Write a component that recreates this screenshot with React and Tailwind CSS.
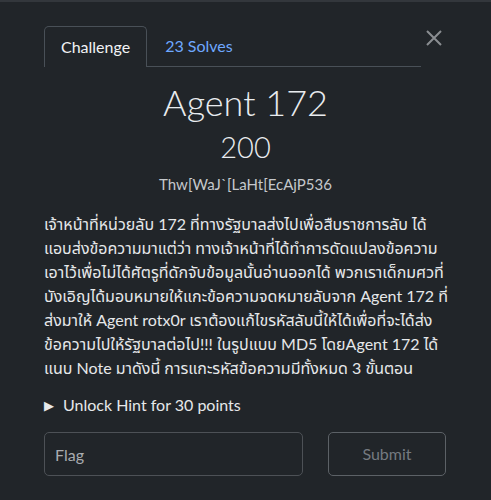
import React from 'react';

const lines = [
  'เจ้าหน้าที่หน่วยลับ 172 ที่ทางรัฐบาลส่งไปเพื่อสืบราชการลับ ได้',
  'แอบส่งข้อความมาแต่ว่า ทางเจ้าหน้าที่ได้ทำการดัดแปลงข้อความ',
  'เอาไว้เพื่อไม่ได้ศัตรูที่ดักจับข้อมูลนั้นอ่านออกได้ พวกเราเด็กมศวที่',
  'บังเอิญได้มอบหมายให้แกะข้อความจดหมายลับจาก Agent 172 ที่',
  'ส่งมาให้ Agent rotx0r เราต้องแก้ไขรหัสลับนี้ให้ได้เพื่อที่จะได้ส่ง',
  'ข้อความไปให้รัฐบาลต่อไป!!! ในรูปแบบ MD5 โดยAgent 172 ได้',
  'แนบ Note มาดังนี้ การแกะรหัสข้อความมีทั้งหมด 3 ขั้นตอน',
];

const App = () => {
  return (
    <div className="min-h-screen bg-[#212529] text-[#dee2e6] font-['Lato','Noto_Sans','Noto_Sans_Thai',sans-serif]">
      <div className="h-[2px] bg-[#33373c]" />
      <div className="px-[44px] pt-[24px]">
        {/* tabs + close */}
        <div className="flex items-start">
          <div className="flex flex-1 border-b border-[#495057]">
            <div className="-mb-px px-4 py-2 text-base leading-6 text-[#f1f3f5] bg-[#212529] border border-b-0 border-[#495057] rounded-t-[5px]">
              Challenge
            </div>
            <div className="px-[18px] py-2 text-base leading-6 text-[#6ea8fe]">23 Solves</div>
          </div>
          <button className="w-[26px] h-[40px] flex items-start justify-start pl-[5px] pt-[4px] text-[#8a8d91]">
            <svg width="16" height="16" viewBox="0 0 16 16" stroke="currentColor" strokeWidth="2">
              <path d="M1 1 L15 15 M15 1 L1 15" />
            </svg>
          </button>
        </div>

        {/* header */}
        <div className="flex flex-col items-center mt-[13px]">
          <h3 className="text-[36px] leading-[44px] font-light text-[#e9ecef]">Agent 172</h3>
          <h4 className="text-[29px] leading-[36px] mt-[5px] font-light text-[#e9ecef]">200</h4>
          <p className="text-[15px] leading-[22px] mt-[8px] text-[#c5c8cc]">Thw[WaJ`[LaHt[EcAjP536</p>
        </div>

        {/* description */}
        <div className="mt-[17px] text-[16px] leading-[24px] text-[#e6e8ea]">
          {lines.map((l, i) => (
            <div key={i} className="h-[24px] whitespace-nowrap">{l}</div>
          ))}
        </div>

        {/* hint */}
        <div className="mt-[13px] flex items-center gap-[9px] text-[16px] leading-[24px] text-[#e6e8ea]">
          <span className="text-[13px] leading-none text-[#e6e8ea]">▶</span>
          <span>Unlock Hint for 30 points</span>
        </div>

        {/* flag form */}
        <div className="mt-[15px] flex gap-[25px]">
          <input
            placeholder="Flag"
            className="w-[259px] h-[44px] px-[10px] rounded-[5px] bg-[#212529] border border-[#4d5156] text-base text-[#e6e8ea] placeholder:text-[#a9acb0] outline-none"
          />
          <button className="w-[118px] h-[44px] rounded-[5px] border border-[#5c6166] text-base text-[#757a80]">
            Submit
          </button>
        </div>
      </div>
    </div>
  );
};

export default App;
